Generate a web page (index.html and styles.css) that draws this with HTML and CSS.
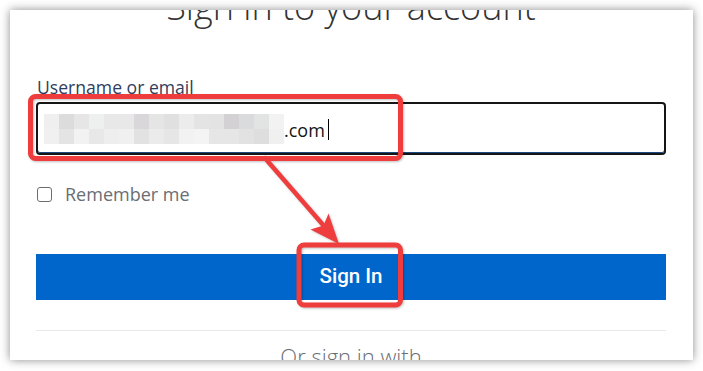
FILE: index.html
```html
<!DOCTYPE html>
<html lang="en">
<head>
<meta charset="utf-8">
<title>Sign in to your account</title>
<link rel="stylesheet" href="styles.css">
</head>
<body>
<div class="frame">
  <div class="card">
    <h1 class="title">Sign in to your account</h1>
    <form class="form">
      <label class="label">Username or email</label>
      <div class="input">
        <svg class="blur" width="240" height="30" viewBox="0 0 240 30">
          <rect x="0" y="0" width="15" height="15" fill="#efefef"/>
          <rect x="15" y="0" width="15" height="15" fill="#dcdcdc"/>
          <rect x="30" y="0" width="15" height="15" fill="#e6e6e6"/>
          <rect x="45" y="0" width="15" height="15" fill="#eef0ef"/>
          <rect x="60" y="0" width="15" height="15" fill="#e8e8e8"/>
          <rect x="75" y="0" width="15" height="15" fill="#e8e8e8"/>
          <rect x="90" y="0" width="15" height="15" fill="#d9d7d9"/>
          <rect x="105" y="0" width="15" height="15" fill="#e5e5e5"/>
          <rect x="120" y="0" width="15" height="15" fill="#e0e0e0"/>
          <rect x="135" y="0" width="15" height="15" fill="#ececec"/>
          <rect x="150" y="0" width="15" height="15" fill="#e4e4e4"/>
          <rect x="165" y="0" width="15" height="15" fill="#e3e3e3"/>
          <rect x="180" y="0" width="15" height="15" fill="#d3d1d3"/>
          <rect x="195" y="0" width="15" height="15" fill="#d9dbdd"/>
          <rect x="210" y="0" width="15" height="15" fill="#e2e4e4"/>
          <rect x="225" y="0" width="15" height="15" fill="#f2f2f2"/>
          <rect x="0" y="15" width="15" height="15" fill="#f0f0f0"/>
          <rect x="15" y="15" width="15" height="15" fill="#e4e4e4"/>
          <rect x="30" y="15" width="15" height="15" fill="#f2f2f2"/>
          <rect x="45" y="15" width="15" height="15" fill="#e8e8e8"/>
          <rect x="60" y="15" width="15" height="15" fill="#eeeeee"/>
          <rect x="75" y="15" width="15" height="15" fill="#f0f0f0"/>
          <rect x="90" y="15" width="15" height="15" fill="#e2e2e2"/>
          <rect x="105" y="15" width="15" height="15" fill="#ebebeb"/>
          <rect x="120" y="15" width="15" height="15" fill="#e6e6e6"/>
          <rect x="135" y="15" width="15" height="15" fill="#f2f2f2"/>
          <rect x="150" y="15" width="15" height="15" fill="#f4f4f4"/>
          <rect x="165" y="15" width="15" height="15" fill="#e6e6e6"/>
          <rect x="180" y="15" width="15" height="15" fill="#e6e6e6"/>
          <rect x="195" y="15" width="15" height="15" fill="#e2e2e2"/>
          <rect x="210" y="15" width="15" height="15" fill="#dedede"/>
          <rect x="225" y="15" width="15" height="15" fill="#f0f0f0"/>
        </svg>
        <span class="value">.com</span><span class="caret"></span>
      </div>
      <div class="remember">
        <span class="checkbox"></span>
        <span class="remember-text">Remember me</span>
      </div>
      <button type="button" class="btn">Sign In</button>
      <div class="divider"></div>
      <p class="alt">Or sign in with</p>
    </form>
  </div>
</div>
<svg class="annot" width="703" height="371" viewBox="0 0 703 371">
  <g class="marks">
    <rect x="30.5" y="96.5" width="370" height="62" rx="5" ry="5" fill="none" stroke="#ef3d3d" stroke-width="5"/>
    <rect x="299" y="245" width="101.5" height="60" rx="5" ry="5" fill="none" stroke="#ef3d3d" stroke-width="5"/>
    <line x1="264" y1="157" x2="324" y2="226" stroke="#ef3d3d" stroke-width="4.5"/>
    <polygon points="339,244 310.5,229.5 323.5,225.5 328.5,213.5" fill="#ef3d3d"/>
  </g>
</svg>
</body>
</html>
```

FILE: styles.css
```css
html, body {
  margin: 0;
  padding: 0;
  background: #ffffff;
}

body {
  width: 703px;
  height: 371px;
  overflow: hidden;
  position: relative;
  font-family: "Open Sans", "Liberation Sans", sans-serif;
}

.frame {
  margin: 10px 10px 0 10px;
  width: 683px;
  height: 350px;
  background: #ffffff;
  box-shadow: 0 0 9px rgba(0, 0, 0, 0.45);
  overflow: hidden;
}

.card {
  padding: 0 27px 0 26px;
}

.title {
  margin: -23px 0 0 0;
  font-family: "Open Sans", sans-serif;
  font-weight: 300;
  font-size: 36px;
  line-height: 40px;
  color: #333333;
  text-align: center;
}

.form {
  display: flex;
  flex-direction: column;
  margin-top: 50px;
}

.label {
  font-size: 17.6px;
  line-height: 20px;
  color: #2f3d5c;
  margin-left: 1px;
}

.input {
  margin-top: 5px;
  height: 49px;
  border: 2px solid #151515;
  border-radius: 4px;
  box-shadow: inset 0 -1px 0 #1c4a80;
  display: flex;
  align-items: center;
  padding-left: 6px;
}

.blur {
  display: block;
  flex: none;
}

.value {
  font-size: 18px;
  line-height: 24px;
  color: #151515;
  margin-top: 2px;
}

.caret {
  width: 1px;
  height: 21px;
  background: #000000;
  margin-left: 3px;
  margin-top: 1px;
}

.remember {
  display: flex;
  align-items: center;
  margin-top: 31px;
  height: 16px;
  gap: 13px;
  margin-left: 1px;
}

.checkbox {
  width: 13px;
  height: 13px;
  border: 1.5px solid #6a6e73;
  border-radius: 3px;
  flex: none;
}

.remember-text {
  font-size: 18px;
  line-height: 24px;
  color: #6a6e73;
}

.btn {
  margin-top: 52px;
  height: 46px;
  border: 0;
  border-radius: 0;
  background: #0066cc;
  color: #ffffff;
  font-family: Roboto, "Liberation Sans", sans-serif;
  font-weight: 500;
  font-size: 20.5px;
  line-height: 24px;
  padding: 0 0 3px 0;
  cursor: pointer;
}

.divider {
  margin-top: 30px;
  height: 1px;
  background: #e8e8e8;
}

.alt {
  margin: 10px 0 0 0;
  font-family: "Open Sans", sans-serif;
  font-weight: 300;
  font-size: 22px;
  line-height: 30px;
  color: #6a6e73;
  text-align: center;
}

.annot {
  position: absolute;
  left: 0;
  top: 0;
  pointer-events: none;
}

.marks {
  filter: drop-shadow(1px 1px 1px rgba(0, 0, 0, 0.25));
}
```
